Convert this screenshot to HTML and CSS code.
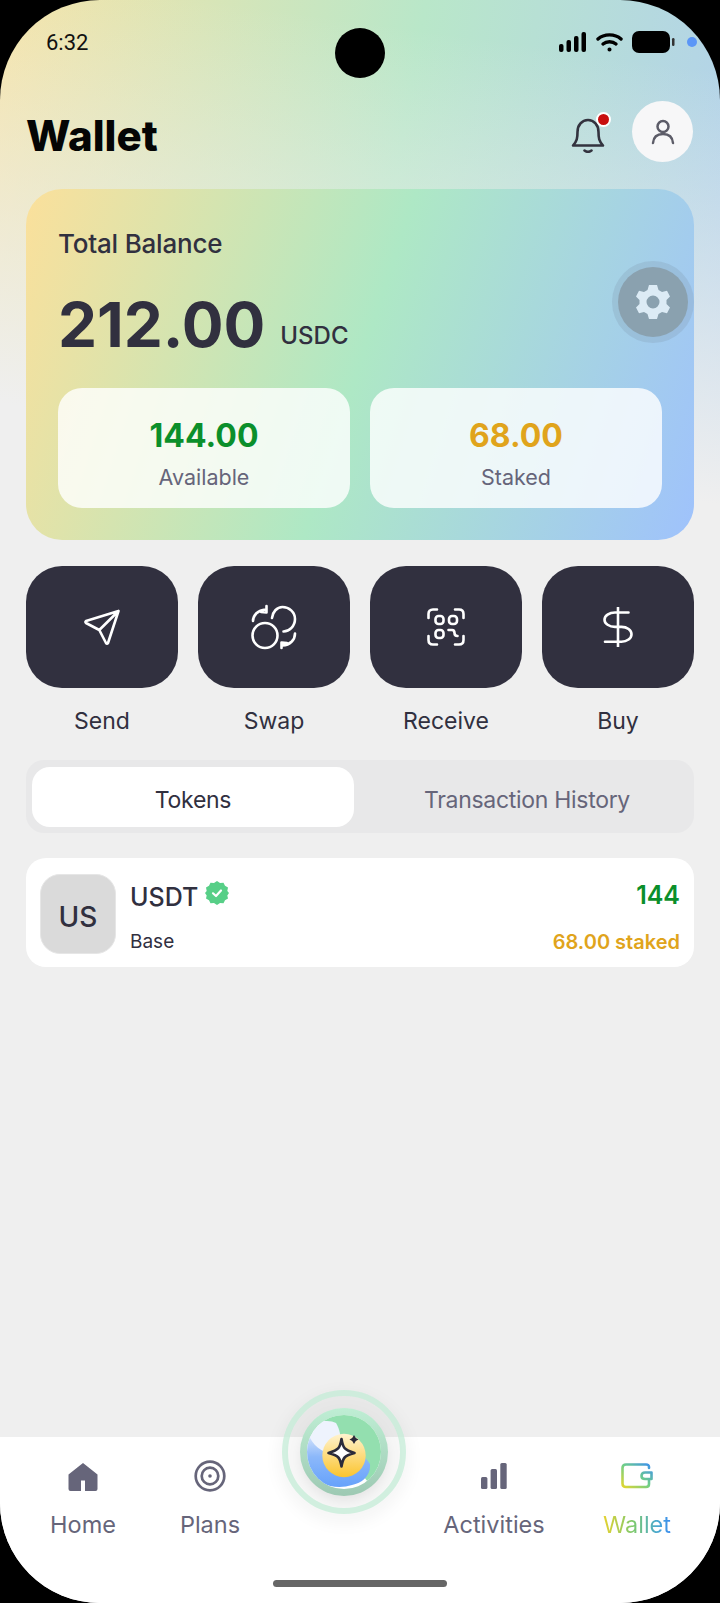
FILE: index.html
```html
<!DOCTYPE html>
<html lang="en">
<head>
    <meta charset="UTF-8">
    <meta name="viewport" content="width=device-width, initial-scale=1.0">
    <title>Wallet</title>
    <link rel="stylesheet" href="styles.css">
</head>
<body>
    <div class="screen">
        <!-- Status Bar -->
        <div class="status-bar">
            <span class="time">6:32</span>
            <div class="status-icons">
                <svg width="28" height="20" viewBox="0 0 28 20"><rect x="0" y="12" width="4.5" height="8" rx="2"/><rect x="7.5" y="8" width="4.5" height="12" rx="2"/><rect x="15" y="4" width="4.5" height="16" rx="2"/><rect x="22.500" y="0" width="4.500" height="20" rx="2"/></svg>
                <svg width="27" height="20" viewBox="0 0 27 20" fill="none" stroke="#000" stroke-width="3.4" stroke-linecap="round"><path d="M2 7 C8 1.500 19 1.500 25 7"/><path d="M7 12 C10.500 9 16.500 9 20 12"/><circle cx="13.500" cy="17.500" r="1.300" fill="#000" stroke-width="1.500"/></svg>
                <svg width="43" height="22" viewBox="0 0 43 22"><rect width="38" height="22" rx="7"/><rect x="40" y="7" width="2.500" height="8" rx="1.200" fill="#333"/></svg>
                <span class="status-dot"></span>
            </div>
        </div>
        <div class="camera"></div>

        <!-- Header -->
        <header class="header">
            <h1>Wallet</h1>
            <div class="header-actions">
                <div class="bell">
                    <svg width="34" height="36" viewBox="0 0 34 36" fill="none" stroke="#33333f" stroke-width="2.600" stroke-linecap="round" stroke-linejoin="round"><path d="M2 28.500 C6 24 6.500 21 6.500 15 C6.500 8 11 3 17 3 C23 3 27.500 8 27.500 15 C27.500 21 28 24 32 28.500 Z"/><path d="M13.500 33.500 C15.500 35 18.500 35 20.500 33.500"/></svg>
                    <span class="bell-dot"></span>
                </div>
                <div class="avatar">
                    <svg width="24" height="26" viewBox="0 0 24 26" fill="none" stroke="#5c5c68" stroke-width="2.500" stroke-linecap="round"><circle cx="12" cy="7.500" r="5.500"/><path d="M2 24 C2.500 18 6.500 15 12 15 C17.500 15 21.500 18 22 24"/></svg>
                </div>
            </div>
        </header>

        <!-- Balance Card -->
        <section class="balance-card">
            <div class="balance-label">Total Balance</div>
            <div class="balance-amount"><strong>212.00</strong><span>USDC</span></div>
            <div class="balance-split">
                <div class="split-box">
                    <div class="split-value green">144.00</div>
                    <div class="split-label">Available</div>
                </div>
                <div class="split-box">
                    <div class="split-value amber">68.00</div>
                    <div class="split-label">Staked</div>
                </div>
            </div>
            <div class="gear">
                <svg width="34" height="36" viewBox="0 0 34 36"><path fill-rule="evenodd" fill="#dcebf5" d="M13 1 H21 L22.500 6 L26 8 L31 6.700 L34 12.500 L30.500 16 V20 L34 23.500 L31 29.300 L26 28 L22.500 30 L21 35 H13 L11.500 30 L8 28 L3 29.300 L0 23.500 L3.500 20 V16 L0 12.500 L3 6.700 L8 8 L11.500 6 Z M17 11.500 A6.500 6.500 0 1 0 17 24.500 A6.500 6.500 0 1 0 17 11.500 Z"/></svg>
            </div>
        </section>

        <!-- Quick Actions -->
        <section class="actions">
            <div class="action">
                <div class="action-btn">
                    <svg width="40" height="40" viewBox="0 0 40 40"><path d="M36.500 4 L4 14 Q2.800 15 4 16 L17.300 23 L24 36 Q25 37.500 26 36 Z M36.500 4 L17.300 23"/></svg>
                </div>
                <span>Send</span>
            </div>
            <div class="action">
                <div class="action-btn">
                    <svg width="48" height="48" viewBox="0 0 48 48"><circle cx="15" cy="32.500" r="12.500"/><path d="M22 15 C22.500 9 27 4 32.500 4 C39 4 45 9 45 16 C45 23 39.500 28.500 33.500 28.500"/><path d="M3 18 C3 12 8 7 15.500 6.500 M16.500 3 L16.500 9.500 L11 9"/><path d="M45 30.500 C45 37 40 42 32.500 42.500 M31.500 45 L31.500 39.500 L37 40"/></svg>
                </div>
                <span>Swap</span>
            </div>
            <div class="action">
                <div class="action-btn">
                    <svg width="40" height="40" viewBox="0 0 40 40"><path d="M2.500 11 V7 Q2.500 2.500 7 2.500 H11 M29 2.500 H33 Q37.500 2.500 37.500 7 V11 M2.500 29 V33 Q2.500 37.500 7 37.500 H11 M29 37.500 H33 Q37.500 37.500 37.500 33 V29"/><rect x="9.500" y="9" width="8" height="8" rx="3"/><rect x="23" y="9" width="8" height="8" rx="3"/><rect x="9.500" y="23" width="8" height="8" rx="3"/><path d="M22.500 23 H26 Q28.500 23 28.500 26 Q28.500 29 31.500 29"/></svg>
                </div>
                <span>Receive</span>
            </div>
            <div class="action">
                <div class="action-btn">
                    <svg width="40" height="40" viewBox="0 0 40 40"><path d="M20 .5 V39.500 M30.500 5.500 H17 A10.500 7.200 0 0 0 17 19.900 H23.500 A10 7.400 0 0 1 23.500 34.700 H7"/></svg>
                </div>
                <span>Buy</span>
            </div>
        </section>

        <!-- Tabs -->
        <div class="tabs">
            <div class="tab active">Tokens</div>
            <div class="tab">Transaction History</div>
        </div>

        <!-- Token List -->
        <div class="token-card">
            <div class="token-logo">US</div>
            <div class="token-info">
                <div class="token-name">USDT
                    <svg width="24" height="24" viewBox="0 0 24 24"><path fill="#57cf87" d="M12 0 L15 2 L18.500 1.700 L20 4.800 L23 6.500 L22.300 10 L24 12 L22.300 14.500 L23 17.500 L20 19.200 L18.500 22.300 L15 22 L12 24 L9 22 L5.500 22.300 L4 19.200 L1 17.500 L1.700 14.500 L0 12 L1.700 10 L1 6.500 L4 4.800 L5.500 1.700 L9 2 Z"/><path fill="none" stroke="#fff" stroke-width="2.200" stroke-linecap="round" stroke-linejoin="round" d="M8 12.300 L11 15 L16 9.500"/></svg>
                </div>
                <div class="token-chain">Base</div>
            </div>
            <div class="token-values">
                <div class="token-amount">144</div>
                <div class="token-staked">68.00 staked</div>
            </div>
        </div>

        <!-- Bottom Navigation -->
        <nav class="bottom-nav">
            <div class="nav-item">
                <svg width="30" height="28" viewBox="0 0 30 28"><path fill="#66657a" d="M15 0 L29.500 11.500 V26 Q29.500 28 27.500 28 H17 V17.500 H13 V28 H2.500 Q.5 28 .5 26 V11.500 Z"/></svg>
                <span>Home</span>
            </div>
            <div class="nav-item plans">
                <svg width="32" height="32" viewBox="0 0 32 32" fill="none" stroke="#66657a" stroke-width="2.700"><circle cx="16" cy="16" r="14.300"/><circle cx="16" cy="16" r="8.300"/><circle cx="16" cy="16" r="1.800" fill="#66657a" stroke="none"/></svg>
                <span>Plans</span>
            </div>
            <div class="nav-item activities">
                <svg width="26" height="26" viewBox="0 0 26 26" fill="#66657a"><rect x="0" y="14" width="6.400" height="12" rx="1.500"/><rect x="9.600" y="6" width="6.400" height="20" rx="1.500"/><rect x="19.300" y="0" width="6.400" height="26" rx="1.500"/></svg>
                <span>Activities</span>
            </div>
            <div class="nav-item">
                <svg width="32" height="26" viewBox="0 0 32 26" fill="none">
                    <defs><linearGradient id="walletGrad" x1="0" y1="1" x2="1" y2="0"><stop offset="0" stop-color="#e2d62f"/><stop offset=".5" stop-color="#6fcf88"/><stop offset="1" stop-color="#3b8ff0"/></linearGradient></defs>
                    <path stroke="url(#walletGrad)" stroke-width="2.600" stroke-linecap="round" stroke-linejoin="round" d="M28 5 V4 Q28 1.500 25 1.500 H5 Q1.500 1.500 1.500 5 V20.500 Q1.500 24 5 24 H25 Q28 24 28 21 V16 H24 Q20.500 16 20.500 13 Q20.500 9.500 24 9.500 H30.500 V16 H28"/>
                </svg>
                <span class="wallet-label">Wallet</span>
            </div>
        </nav>

        <!-- Centre AI Button -->
        <div class="ai-button">
            <svg width="124" height="124" viewBox="-62 -62 124 124">
                <defs>
                    <linearGradient id="aiRim" x1="0" y1="0" x2="0" y2="1"><stop offset="0" stop-color="#bfeed4"/><stop offset="1" stop-color="#9dc9b3"/></linearGradient>
                    <linearGradient id="aiBlue" x1="0" y1="0" x2="0" y2="1"><stop offset="0" stop-color="#dfe9fb"/><stop offset=".45" stop-color="#8cb8fa"/><stop offset="1" stop-color="#66a2fb"/></linearGradient>
                    <linearGradient id="aiYellow" x1="0" y1="0" x2="0" y2="1"><stop offset="0" stop-color="#fff3cf"/><stop offset="1" stop-color="#fbc42e"/></linearGradient>
                    <clipPath id="aiClip"><circle r="37"/></clipPath>
                </defs>
                <circle r="59" fill="none" stroke="#c4ecd7" stroke-opacity=".75" stroke-width="6"/>
                <circle r="44" fill="url(#aiRim)"/>
                <circle r="37" fill="#fff"/>
                <g clip-path="url(#aiClip)">
                    <path fill="#93dfaf" d="M-22 -33 C0 -44 40 -40 40 0 C40 14 36 26 24 30 L0 0 Z"/>
                    <path fill="url(#aiBlue)" d="M-40 -20 C-18 -8 14 -8 26 12 C27 24 18 31 8 33 C-8 38 -30 34 -40 12 Z"/>
                    <path fill="#eef3fd" d="M-37 -24 C-28 -31 -15 -33 -8 -29 C0 -15 -4 -5 -14 2 C-26 -2 -35 -10 -37 -24 Z"/>
                    <circle cx="0" cy="3.500" r="21.700" fill="url(#aiYellow)"/>
                </g>
                <path fill="#fff" stroke="#2b2b3a" stroke-width="2.600" stroke-linejoin="round" d="M-2.500 -13 C-1 -4 0 -2.500 10.500 1 C0 4 -1 5.500 -2.500 14.500 C-4 5.500 -5 4 -15.500 1 C-5 -2.500 -4 -4 -2.500 -13 Z"/>
                <path fill="#2b2b3a" d="M10 -17 L11.800 -14 L14.500 -12.500 L11.800 -11 L10 -8 L8.200 -11 L5.500 -12.500 L8.200 -14 Z"/>
            </svg>
        </div>

        <div class="home-indicator"></div>
    </div>
</body>
</html>
```

FILE: styles.css
```css
:root {
    --dark: #31303f;
    --muted: #66657a;
    --green: #0b8f2b;
    --amber: #e0a41c;
}

* {
    box-sizing: border-box;
}

body {
    margin: 0;
    background-color: #000;
    font-family: 'Inter', sans-serif;
    color: var(--dark);
}

.screen {
    position: relative;
    display: flex;
    flex-direction: column;
    width: 720px;
    height: 1603px;
    overflow: hidden;
    border-radius: 100px;
    background-color: #efefef;
    background-image:
        linear-gradient(188deg, rgba(239,239,239,0) 70px, #efefef 500px),
        linear-gradient(100deg, #f6e3a6 0%, #b9e7c9 52%, #b2cfef 100%);
    background-size: 100% 560px;
    background-repeat: no-repeat;
}

/* Status Bar */
.status-bar {
    display: flex;
    justify-content: space-between;
    align-items: center;
    height: 84px;
    padding: 0 23px 0 46px;
}

.time {
    font-family: 'Roboto', sans-serif;
    font-size: 22px;
    color: #111;
}

.status-icons {
    display: flex;
    align-items: center;
    gap: 9px;
}

.status-dot {
    width: 10px;
    height: 10px;
    margin-left: 3px;
    border-radius: 50%;
    background-color: #5b96f7;
}

.camera {
    position: absolute;
    top: 28px;
    left: 335px;
    width: 50px;
    height: 50px;
    border-radius: 50%;
    background-color: #000;
}

/* Header */
.header {
    display: flex;
    justify-content: space-between;
    align-items: center;
    height: 105px;
    padding: 0 27px 10px 26px;
}

.header h1 {
    margin: 8px 0 0;
    font-size: 42px;
    font-weight: 800;
    color: #050505;
}

.header-actions {
    display: flex;
    align-items: center;
    gap: 27px;
}

.bell {
    position: relative;
    width: 34px;
    height: 36px;
    margin-top: 6px;
}

.bell-dot {
    position: absolute;
    top: -5px;
    right: -6px;
    width: 15px;
    height: 15px;
    border: 2.5px solid #fff;
    border-radius: 50%;
    background-color: #c80f0f;
}

.avatar {
    display: flex;
    justify-content: center;
    align-items: center;
    width: 61px;
    height: 61px;
    border-radius: 50%;
    background-color: #f7f7f8;
}

/* Balance Card */
.balance-card {
    position: relative;
    height: 351px;
    margin: 0 26px;
    padding: 40px 32px 32px;
    border-radius: 36px;
    background: linear-gradient(108deg, #fbe09b 0%, #aee8c5 50%, #9fc2fc 100%);
}

.balance-label {
    font-size: 26px;
    font-weight: 500;
    line-height: 30px;
    letter-spacing: -0.2px;
}

.balance-amount {
    height: 80px;
    margin-top: 26px;
    line-height: 80px;
    white-space: nowrap;
}

.balance-amount strong {
    font-size: 62px;
    font-weight: 700;
}

.balance-amount span {
    margin-left: 15px;
    font-size: 24px;
    font-weight: 500;
    vertical-align: 3px;
}

.balance-split {
    display: flex;
    gap: 20px;
    margin-top: 23px;
}

.split-box {
    flex: 1;
    height: 120px;
    padding-top: 28px;
    border-radius: 24px;
    background-color: rgba(255,255,255,0.8);
    text-align: center;
}

.split-value {
    font-size: 32px;
    font-weight: 700;
    line-height: 40px;
}

.split-label {
    margin-top: 8px;
    font-size: 21.5px;
    line-height: 26px;
    color: var(--muted);
}

.green {
    color: var(--green);
}

.amber {
    color: var(--amber);
}

.gear {
    position: absolute;
    top: 78px;
    right: 6px;
    display: flex;
    justify-content: center;
    align-items: center;
    width: 70px;
    height: 70px;
    border-radius: 50%;
    background-color: #8aa1af;
    box-shadow: 0 0 0 6px rgba(130,155,175,0.28);
}

/* Quick Actions */
.actions {
    display: flex;
    gap: 20px;
    margin: 26px 26px 0;
}

.action {
    flex: 1;
    text-align: center;
    font-size: 23px;
    line-height: 28px;
}

.action-btn {
    display: flex;
    justify-content: center;
    align-items: center;
    height: 122px;
    margin-bottom: 19px;
    border-radius: 36px;
    background-color: var(--dark);
}

.action-btn svg {
    fill: none;
    stroke: #fff;
    stroke-width: 2.600;
    stroke-linecap: round;
    stroke-linejoin: round;
}

/* Tabs */
.tabs {
    display: flex;
    height: 73px;
    margin: 25px 26px 0;
    padding: 7px 6px 6px;
    border-radius: 18px;
    background-color: #e8e8e9;
}

.tab {
    flex: 1;
    display: flex;
    justify-content: center;
    align-items: center;
    padding: 6px 0 0 12px;
    font-size: 23px;
    letter-spacing: -0.3px;
    color: var(--muted);
}

.tab.active {
    flex: none;
    width: 322px;
    padding-left: 0;
    border-radius: 18px;
    background-color: #fff;
    color: var(--dark);
}

/* Token List */
.token-card {
    display: flex;
    align-items: stretch;
    height: 109px;
    margin: 25px 26px 0;
    padding: 16px 14px 13px;
    border-radius: 20px;
    background-color: #fff;
}

.token-logo {
    display: flex;
    justify-content: center;
    align-items: center;
    width: 76px;
    padding-top: 6px;
    border: 1px solid #e6e6e6;
    border-radius: 20px;
    background-color: #dadada;
    font-size: 28px;
    font-weight: 500;
}

.token-info {
    flex: 1;
    display: flex;
    flex-direction: column;
    justify-content: space-between;
    margin-left: 14px;
    padding-top: 7px;
}

.token-name {
    display: flex;
    align-items: flex-start;
    gap: 7px;
    font-size: 25px;
    font-weight: 500;
    line-height: 32px;
}

.token-chain {
    font-size: 19px;
    line-height: 24px;
}

.token-values {
    display: flex;
    flex-direction: column;
    justify-content: space-between;
    padding-top: 5px;
    text-align: right;
}

.token-amount {
    font-size: 25px;
    font-weight: 600;
    line-height: 32px;
    color: var(--green);
}

.token-staked {
    font-size: 20px;
    font-weight: 600;
    line-height: 24px;
    color: var(--amber);
}

/* Bottom Navigation */
.bottom-nav {
    display: grid;
    grid-template-columns: 126px 128px 156px 128px 158px;
    align-items: start;
    height: 166px;
    margin-top: auto;
    padding: 26px 0 0 20px;
    background-color: #fff;
}

.nav-item {
    display: flex;
    flex-direction: column;
    align-items: center;
    justify-content: space-between;
    height: 77px;
    font-size: 23.5px;
    line-height: 30px;
    color: var(--muted);
}

.nav-item.plans svg {
    margin-top: -3px;
}

.nav-item.activities {
    grid-column: 4;
}

.wallet-label {
    background: linear-gradient(90deg, #e6d22f 0%, #7cc96f 45%, #4aa8d0 80%, #3b8cf0 100%);
    -webkit-background-clip: text;
    background-clip: text;
    color: transparent;
}

/* Centre AI Button */
.ai-button {
    position: absolute;
    left: 282px;
    top: 1390px;
    width: 124px;
    height: 124px;
    filter: drop-shadow(0 6px 8px rgba(0,0,0,0.12));
}

.home-indicator {
    position: absolute;
    left: 273px;
    bottom: 16px;
    width: 174px;
    height: 7px;
    border-radius: 4px;
    background-color: #666;
}
```
